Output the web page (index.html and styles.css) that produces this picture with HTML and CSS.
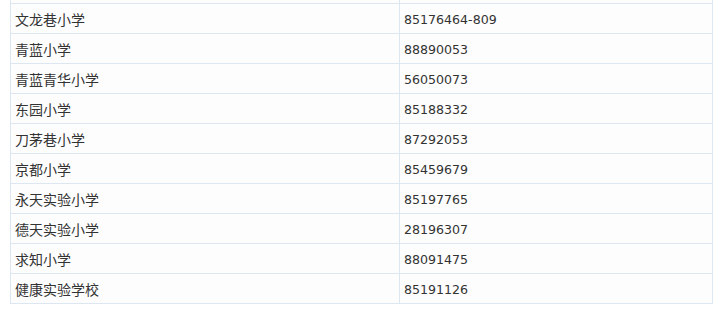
FILE: index.html
```html
<!DOCTYPE html>
<html lang="zh-CN">
<head>
<meta charset="utf-8">
<title>学校电话</title>
<link rel="stylesheet" href="styles.css">
</head>
<body>
<div class="table">
  <div class="row top"><div class="cell name"></div><div class="cell tel"></div></div>
  <div class="row"><div class="cell name">文龙巷小学</div><div class="cell tel">85176464-809</div></div>
  <div class="row"><div class="cell name">青蓝小学</div><div class="cell tel">88890053</div></div>
  <div class="row"><div class="cell name">青蓝青华小学</div><div class="cell tel">56050073</div></div>
  <div class="row"><div class="cell name">东园小学</div><div class="cell tel">85188332</div></div>
  <div class="row"><div class="cell name">刀茅巷小学</div><div class="cell tel">87292053</div></div>
  <div class="row"><div class="cell name">京都小学</div><div class="cell tel">85459679</div></div>
  <div class="row"><div class="cell name">永天实验小学</div><div class="cell tel">85197765</div></div>
  <div class="row"><div class="cell name">德天实验小学</div><div class="cell tel">28196307</div></div>
  <div class="row"><div class="cell name">求知小学</div><div class="cell tel">88091475</div></div>
  <div class="row"><div class="cell name">健康实验学校</div><div class="cell tel">85191126</div></div>
</div>
</body>
</html>
```
FILE: styles.css
```css
html, body {
  margin: 0;
  padding: 0;
  background: #ffffff;
}
.table {
  margin-left: 10px;
  width: 703px;
  box-sizing: border-box;
  border-left: 1px solid #dde7f1;
  border-right: 1px solid #dde7f1;
  background: #fdfdfd;
}
.row {
  display: grid;
  grid-template-columns: 389px 1fr;
  height: 30px;
  box-sizing: border-box;
  border-bottom: 1px solid #dde7f1;
}
.row.top {
  height: 4px;
}
.cell {
  display: flex;
  align-items: center;
  padding-left: 4px;
  color: #333333;
  box-sizing: border-box;
}
.name {
  border-right: 1px solid #dde7f1;
  font-family: "Noto Sans CJK SC", sans-serif;
  font-size: 14px;
}
.tel {
  font-family: "DejaVu Sans", sans-serif;
  font-size: 12.6px;
  padding-top: 1px;
}
```
